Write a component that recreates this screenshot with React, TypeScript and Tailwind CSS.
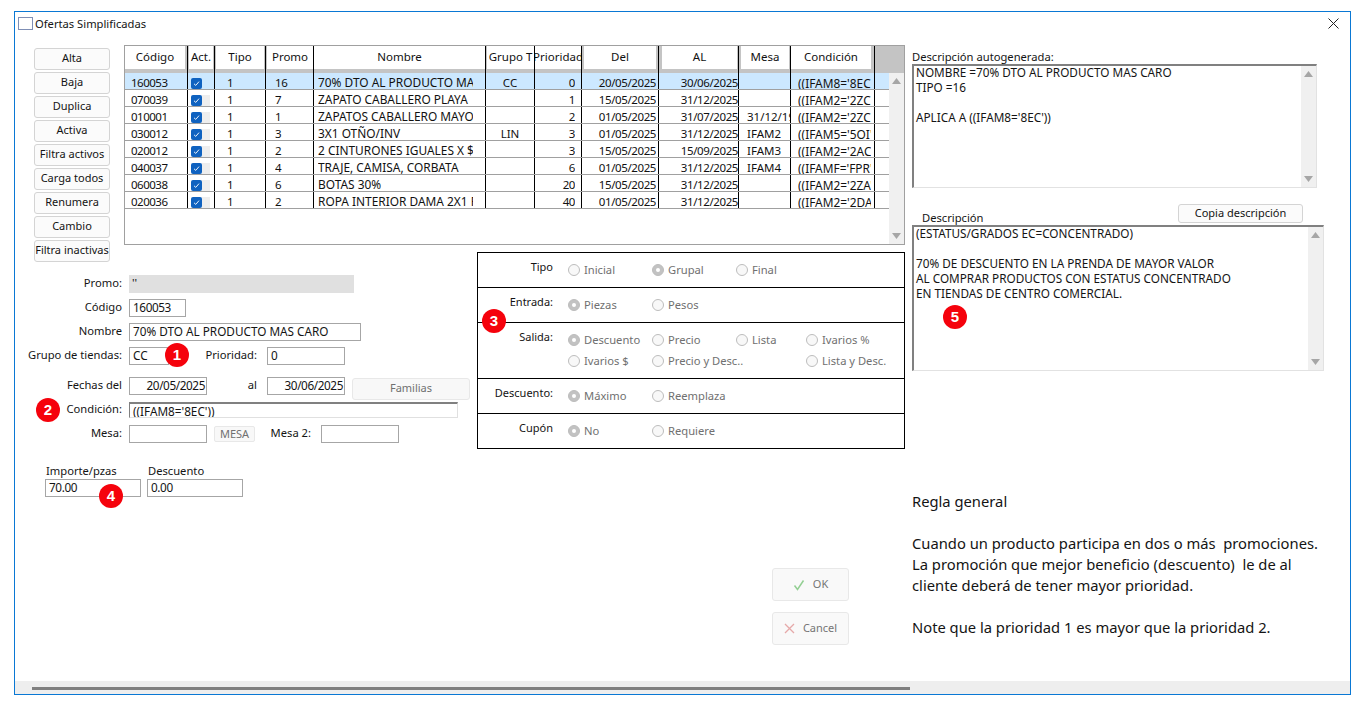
import React from "react";

const FONT = "font-['Noto_Sans','Open_Sans',sans-serif]";

const sideButtons = ["Alta", "Baja", "Duplica", "Activa", "Filtra activos", "Carga todos", "Renumera", "Cambio", "Filtra inactivas"];

type Col = { label: string; w: string; head: string; cell: string };
const cols: Col[] = [
  { label: "Código", w: "w-[63px]", head: "pr-[2px]", cell: "pl-[6px] tracking-[-0.5px]" },
  { label: "Act.", w: "w-[27px]", head: "pl-[1px] pr-[1px]", cell: "" },
  { label: "Tipo", w: "w-[51px]", head: "pl-[1px] pr-[1px]", cell: "pl-[12px]" },
  { label: "Promo", w: "w-[48px]", head: "pl-[1px]", cell: "pl-[9px] tracking-[-0.4px]" },
  { label: "Nombre", w: "w-[172px]", head: "", cell: "pl-[4px] pr-[12px] text-[11.9px] leading-[14px]" },
  { label: "Grupo T", w: "w-[49px]", head: "pl-[1px]", cell: "text-center" },
  { label: "Prioridad", w: "w-[47px]", head: "", cell: "text-right pr-[6px] tracking-[-0.4px]" },
  { label: "Del", w: "w-[77px]", head: "pl-[2px] pr-[2px]", cell: "text-right pr-[2px] tracking-[-0.4px]" },
  { label: "AL", w: "w-[80px]", head: "pl-[3px] pr-[1px]", cell: "text-right tracking-[-0.4px]" },
  { label: "Mesa", w: "w-[52px]", head: "pl-[2px] pr-[1px]", cell: "pl-[8px]" },
  { label: "Condición", w: "w-[84px]", head: "pr-[3px]", cell: "pl-[7px] pr-[3px] text-[11.9px]" },
];

const rows: string[][] = [
  ["160053", "", "1", "16", "70% DTO AL PRODUCTO MAS CARO", "CC", "0", "20/05/2025", "30/06/2025", "", "((IFAM8='8EC'))"],
  ["070039", "", "1", "7", "ZAPATO CABALLERO PLAYA", "", "1", "15/05/2025", "31/12/2025", "", "((IFAM2='2ZC'))"],
  ["010001", "", "1", "1", "ZAPATOS CABALLERO MAYOR", "", "2", "01/05/2025", "31/07/2025", "31/12/1900", "((IFAM2='2ZC'))"],
  ["030012", "", "1", "3", "3X1 OTÑO/INV", "LIN", "3", "01/05/2025", "31/12/2025", "IFAM2", "((IFAM5='5OI'))"],
  ["020012", "", "1", "2", "2 CINTURONES IGUALES X $199", "", "3", "15/05/2025", "15/09/2025", "IFAM3", "((IFAM2='2AC'))"],
  ["040037", "", "1", "4", "TRAJE, CAMISA, CORBATA", "", "6", "01/05/2025", "31/12/2025", "IFAM4", "((IFAMF='FPR'))"],
  ["060038", "", "1", "6", "BOTAS 30%", "", "20", "15/05/2025", "31/12/2025", "", "((IFAM2='2ZA'))"],
  ["020036", "", "1", "2", "ROPA INTERIOR DAMA 2X1 PANTY", "", "40", "01/05/2025", "31/12/2025", "", "((IFAM2='2DA'))"],
];

function Triangle({ down }: { down?: boolean }) {
  return (
    <svg width="9" height="6" viewBox="0 0 9 6" className="fill-[#a6a6a6]">
      <path d={down ? "M0 0h9L4.500 6z" : "M4.500 0L9 6H0z"} />
    </svg>
  );
}

function VScroll() {
  return (
    <div className="w-[15px] h-full bg-[#f0f0f0] flex flex-col items-center justify-between py-[5px] shrink-0">
      <Triangle />
      <Triangle down />
    </div>
  );
}

function Check({ selected }: { selected: boolean }) {
  return (
    <div className="w-full h-full flex items-start pl-[3px] pt-[5px]">
      <div className="relative">
        {!selected && <div className="absolute left-[8px] top-0 w-[11px] h-[11px] bg-[#eeeeee]" />}
        <div className="relative w-[11px] h-[11px] rounded-[2px] bg-[#0f62c0] flex items-center justify-center">
          <svg width="7" height="7" viewBox="0 0 7 7" fill="none" stroke="#e8f1fb" strokeWidth="1">
            <path d="M1 3.800L2.800 5.400L6 1.600" />
          </svg>
        </div>
      </div>
    </div>
  );
}

function Grid() {
  return (
    <div className="w-[781px] h-[200px] border border-[#a0a0a0] flex flex-col bg-white text-[11.5px] leading-[16px] text-[#111]">
      <div className="flex h-[27px] bg-[#c4c4c4] shrink-0">
        {cols.map((c) => (
          <div key={c.label} className={`${c.w} h-full border-r border-black flex pb-[4px] ${c.head}`}>
            <div className="flex-1 bg-white flex items-center justify-center pb-[1px] overflow-hidden whitespace-nowrap">{c.label}</div>
          </div>
        ))}
      </div>
      <div className="flex flex-1 min-h-0">
        <div className="w-[764px]">
          {rows.map((r, i) => (
            <div key={r[0]} className={`flex h-[17px] border-b border-[#a0a0a0] ${i === 0 ? "bg-[#cce8ff]" : ""}`}>
              {cols.map((c, j) => (
                <div key={c.label} className={`${c.w} h-full border-r border-black shrink-0 ${j === 1 ? "" : c.cell}`}>
                  {j === 1 ? (
                    <Check selected={i === 0} />
                  ) : (
                    <div className="overflow-hidden whitespace-nowrap h-full pt-[1.500px]">{r[j]}</div>
                  )}
                </div>
              ))}
            </div>
          ))}
        </div>
        <div className="w-[0px] flex-1" />
        <VScroll />
      </div>
    </div>
  );
}

function Field({ w, value, right, dark, num }: { w: string; value?: string; right?: boolean; dark?: boolean; num?: boolean }) {
  return (
    <div
      className={`${w} ${dark ? "h-[16px] border-[#e0e0e0] border-t-[#808080] border-l-[#808080] border-t-2" : "h-[18px] border-[#a6a6a6]"} shrink-0 border px-[3px] text-[11.75px] leading-[15px] whitespace-nowrap overflow-hidden ${right ? "text-right pr-[1px]" : ""} ${num ? "tracking-[-0.4px]" : ""}`}
    >
      {value}
    </div>
  );
}

function Label({ children, w = "w-[107px]" }: { children: React.ReactNode; w?: string }) {
  return <div className={`${w} shrink-0 text-right text-[11.2px] leading-[14px] pb-[2px] whitespace-nowrap`}>{children}</div>;
}

function Radio({ label, on }: { label: string; on?: boolean }) {
  return (
    <div className="flex items-center h-[16px] whitespace-nowrap text-[#707070] text-[11.2px]">
      <div className={`w-[12px] h-[12px] rounded-full border border-[#bdbdbd] flex items-center justify-center shrink-0 ${on ? "bg-[#c2c2c2]" : "bg-[#f8f8f8]"}`}>
        {on && <div className="w-[4px] h-[4px] rounded-full bg-white" />}
      </div>
      <span className="ml-[4px]">{label}</span>
    </div>
  );
}

function PanelRow({ label, children, tall, last }: { label: string; children: React.ReactNode; tall?: boolean; last?: boolean }) {
  return (
    <div className={`flex ${tall ? "h-[56px]" : "h-[35px]"} ${last ? "" : "border-b border-black"}`}>
      <div className="w-[75px] text-right pt-[7px] text-[11px] leading-[14px] shrink-0">{label}</div>
      <div className="ml-[15px] pt-[9px] grid grid-cols-[84px_84px_70px_90px] gap-y-[5px] content-start">{children}</div>
    </div>
  );
}

function Badge({ n, pos }: { n: string; pos: string }) {
  return (
    <div className={`absolute ${pos} w-[24px] h-[24px] rounded-full bg-[#f5020c] text-white flex items-center justify-center font-['Liberation_Sans',sans-serif] font-bold text-[15px]`}>
      {n}
    </div>
  );
}

function TextBox({ w, h, lines }: { w: string; h: string; lines: string[] }) {
  return (
    <div className={`${w} ${h} flex border-2 border-b border-r border-[#e2e2e2] border-t-[#808080] border-l-[#808080]`}>
      <div className="flex-1 pl-[2px] -mt-[1px] text-[11.75px] leading-[15px] whitespace-pre">
        {lines.map((l, i) => (
          <div key={i} className="h-[15px]">{l}</div>
        ))}
      </div>
      <VScroll />
    </div>
  );
}

function ActionButton({ children, label }: { children: React.ReactNode; label: string }) {
  return (
    <div className="w-[77px] h-[33px] border border-[#e8e8e8] rounded-[3px] bg-[#f9f9f9] flex items-center justify-center gap-[8px] text-[#757575] text-[11px]">
      {children}
      <span>{label}</span>
    </div>
  );
}

export default function App() {
  return (
    <div className={`w-[1371px] h-[705px] bg-white pl-[14px] pt-[11px] text-[#141414] overflow-hidden ${FONT}`}>
      <div className="relative w-[1337px] h-[684px] border border-[#0a78d4] flex flex-col">
        {/* title bar */}
        <div className="h-[24px] flex items-center pl-[3px] pr-[11px] shrink-0">
          <div className="w-[15px] h-[13px] mb-[1px] border border-[#7f8fb5] bg-white" />
          <span className="ml-[2px] text-[11.2px]">Ofertas Simplificadas</span>
          <svg className="ml-auto mb-[2px]" width="11" height="11" viewBox="0 0 11 11" fill="none" stroke="#222" strokeWidth="1">
            <path d="M0.500 0.500L10.500 10.500M10.500 0.500L0.500 10.500" />
          </svg>
        </div>

        <div className="flex flex-1 min-h-0">
          {/* left */}
          <div className="w-[890px] shrink-0 pt-[9px] flex flex-col">
            <div className="flex h-[207px] shrink-0">
              <div className="w-[109px] pl-[19px] pt-[3px] flex flex-col gap-[2px] shrink-0">
                {sideButtons.map((b) => (
                  <div key={b} className="w-[76px] h-[22px] shrink-0 border border-[#d4d4d4] rounded-[3px] bg-[#fbfbfb] flex items-center justify-center pb-[2px] text-[11px] whitespace-nowrap">
                    {b}
                  </div>
                ))}
              </div>
              <Grid />
            </div>
            <div className="flex">
              {/* form */}
              <div className="w-[462px] shrink-0 pt-[23px] flex flex-col">
                <div className="flex items-center gap-[7px] h-[18px]">
                  <Label>Promo:</Label>
                  <div className="w-[225px] h-[18px] bg-[#e0e0e0] pl-[3px] text-[11.5px] leading-[15px]">''</div>
                </div>
                <div className="flex items-center gap-[7px] mt-[6px]">
                  <Label>Código</Label>
                  <Field w="w-[57px]" value="160053" num />
                </div>
                <div className="flex items-center gap-[7px] mt-[6px]">
                  <Label>Nombre</Label>
                  <Field w="w-[232px]" value="70% DTO AL PRODUCTO MAS CARO" />
                </div>
                <div className="flex items-center gap-[7px] mt-[6px]">
                  <Label>Grupo de tiendas:</Label>
                  <Field w="w-[40px]" value="CC" />
                  <Label w="w-[81px]">Prioridad:</Label>
                  <div className="ml-[3px]">
                    <Field w="w-[78px]" value="0" />
                  </div>
                </div>
                <div className="flex items-center gap-[7px] mt-[12px] h-[18px]">
                  <Label>Fechas del</Label>
                  <Field w="w-[78px]" value="20/05/2025" right num />
                  <Label w="w-[43px]">al</Label>
                  <div className="ml-[3px]">
                    <Field w="w-[78px]" value="30/06/2025" right num />
                  </div>
                  <div className="w-[118px] h-[22px] mt-[5px] shrink-0 border border-[#e8e8e8] rounded-[3px] bg-[#f8f8f8] flex items-center justify-center text-[#707070] text-[11px]">Familias</div>
                </div>
                <div className="flex items-center gap-[7px] mt-[7px]">
                  <Label>Condición:</Label>
                  <Field w="w-[329px]" value="((IFAM8='8EC'))" dark />
                </div>
                <div className="flex items-center gap-[7px] mt-[7px]">
                  <Label>Mesa:</Label>
                  <Field w="w-[78px]" />
                  <div className="w-[41px] h-[16px] border border-[#e8e8e8] rounded-[2px] bg-[#f8f8f8] flex items-center justify-center text-[#707070] text-[11px] shrink-0">MESA</div>
                  <Label w="w-[49px]">Mesa 2:</Label>
                  <div className="ml-[3px]">
                    <Field w="w-[78px]" />
                  </div>
                </div>
                <div className="flex ml-[30px] mt-[19px] gap-[6px]">
                  <div className="w-[96px]">
                    <div className="pl-[1px] text-[11.2px] leading-[17px] whitespace-nowrap">Importe/pzas</div>
                    <Field w="w-[96px]" value="70.00" num />
                  </div>
                  <div className="w-[96px]">
                    <div className="pl-[1px] text-[11.2px] leading-[17px] whitespace-nowrap">Descuento</div>
                    <Field w="w-[96px]" value="0.00" num />
                  </div>
                </div>
              </div>
              {/* radios + actions */}
              <div className="w-[428px] shrink-0 flex flex-col">
                <div className="border border-black h-[197px]">
                  <PanelRow label="Tipo">
                    <Radio label="Inicial" />
                    <Radio label="Grupal" on />
                    <Radio label="Final" />
                  </PanelRow>
                  <PanelRow label="Entrada:">
                    <Radio label="Piezas" on />
                    <Radio label="Pesos" />
                  </PanelRow>
                  <PanelRow label="Salida:" tall>
                    <Radio label="Descuento" on />
                    <Radio label="Precio" />
                    <Radio label="Lista" />
                    <Radio label="Ivarios %" />
                    <Radio label="Ivarios $" />
                    <Radio label="Precio y Desc.." />
                    <div />
                    <Radio label="Lista y Desc." />
                  </PanelRow>
                  <PanelRow label="Descuento:">
                    <Radio label="Máximo" on />
                    <Radio label="Reemplaza" />
                  </PanelRow>
                  <PanelRow label="Cupón" last>
                    <Radio label="No" on />
                    <Radio label="Requiere" />
                  </PanelRow>
                </div>
                <div className="ml-[295px] mt-[119px] flex flex-col gap-[11px]">
                  <ActionButton label="OK">
                    <svg width="12" height="12" viewBox="0 0 12 12" fill="none" stroke="#93cf93" strokeWidth="1.500">
                      <path d="M1.500 6.500L4.500 10.500L10.500 1.500" />
                    </svg>
                  </ActionButton>
                  <ActionButton label="Cancel">
                    <svg width="11" height="11" viewBox="0 0 11 11" fill="none" stroke="#e6a9a9" strokeWidth="1.300">
                      <path d="M1 1L10 10M10 1L1 10" />
                    </svg>
                  </ActionButton>
                </div>
              </div>
            </div>
          </div>

          {/* right */}
          <div className="flex-1 pl-[7px] pt-[14px] flex flex-col">
            <div className="text-[11.2px] leading-[14px] whitespace-nowrap">Descripción autogenerada:</div>
            <TextBox w="w-[405px]" h="h-[124px]" lines={["NOMBRE =70% DTO AL PRODUCTO MAS CARO", "TIPO =16", "", "APLICA A ((IFAM8='8EC'))"]} />
            <div className="w-[412px] h-[37px] flex items-end">
              <span className="ml-[10px] text-[11.2px] leading-[14px]">Descripción</span>
              <div className="ml-auto mr-[21px] mb-[2px] w-[125px] h-[19px] border border-[#d4d4d4] rounded-[3px] bg-[#fbfbfb] flex items-center justify-center text-[11px]">Copia descripción</div>
            </div>
            <TextBox
              w="w-[412px]"
              h="h-[146px]"
              lines={["(ESTATUS/GRADOS EC=CONCENTRADO)", "", "70% DE DESCUENTO EN LA PRENDA DE MAYOR VALOR", "AL COMPRAR PRODUCTOS CON ESTATUS CONCENTRADO", "EN TIENDAS DE CENTRO COMERCIAL."]}
            />
            <div className="mt-[120px] text-[14.75px] leading-[21px] whitespace-pre">
              <div>Regla general</div>
              <div className="h-[21px]" />
              <div>Cuando un producto participa en dos o más  promociones.</div>
              <div>La promoción que mejor beneficio (descuento)  le de al</div>
              <div>cliente deberá de tener mayor prioridad.</div>
              <div className="h-[21px]" />
              <div>Note que la prioridad 1 es mayor que la prioridad 2.</div>
            </div>
          </div>
        </div>

        {/* bottom scrollbar */}
        <div className="h-[13px] bg-[#eeeeee] shrink-0 pl-[17px] pt-[6px]">
          <div className="w-[878px] h-[3px] bg-[#808080]" />
        </div>

        <Badge n="1" pos="left-[150px] top-[331px]" />
        <Badge n="2" pos="left-[21px] top-[386px]" />
        <Badge n="3" pos="left-[467px] top-[297px]" />
        <Badge n="4" pos="left-[84px] top-[472px]" />
        <Badge n="5" pos="left-[928px] top-[293px]" />
      </div>
    </div>
  );
}
